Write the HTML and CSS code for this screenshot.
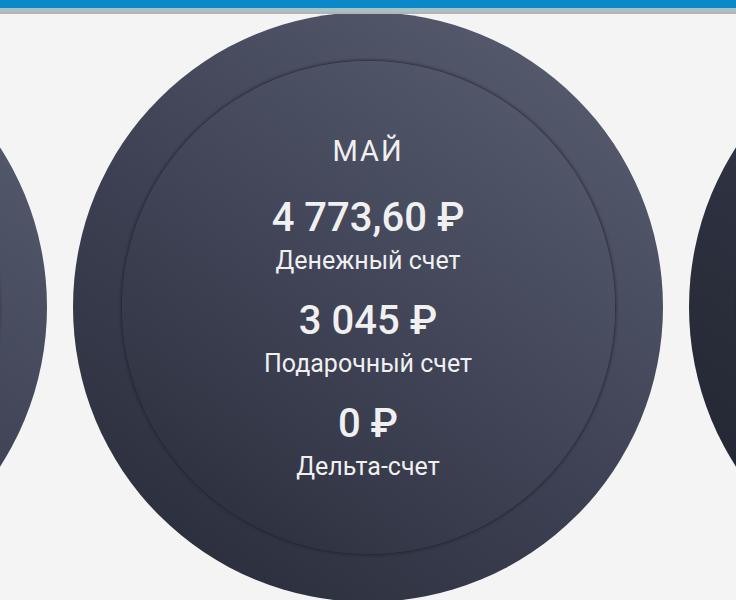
FILE: index.html
```html
<!DOCTYPE html>
<html lang="ru">
<head>
<meta charset="utf-8">
<link rel="stylesheet" href="styles.css">
</head>
<body>
<div class="topbar"></div>
<div class="carousel">
  <div class="disc side"><div class="inner"></div></div>
  <div class="disc main">
    <div class="inner">
      <div class="month">МАЙ</div>
      <div class="acc">
        <div class="amount">4 773,60 ₽</div>
        <div class="label">Денежный счет</div>
      </div>
      <div class="acc">
        <div class="amount">3 045 ₽</div>
        <div class="label">Подарочный счет</div>
      </div>
      <div class="acc">
        <div class="amount">0 ₽</div>
        <div class="label">Дельта-счет</div>
      </div>
    </div>
  </div>
  <div class="disc side right"><div class="inner"></div></div>
</div>
</body>
</html>
```
FILE: styles.css
```css
html, body {
  margin: 0;
  padding: 0;
  background: #f4f4f4;
  height: 600px;
  overflow: hidden;
  font-family: Roboto, "Noto Sans", sans-serif;
}
.topbar {
  height: 8px;
  background: #0a88c8;
  border-bottom: 4px solid #a7c2c7;
  box-shadow: 0 2px 0 #b4b4b4;
  position: relative;
  z-index: 2;
}
.carousel {
  display: flex;
  justify-content: center;
  gap: 26px;
  overflow: hidden;
}
.disc {
  flex: 0 0 590px;
  height: 590px;
  border-radius: 50%;
  background: linear-gradient(35deg, #262a36 0%, #3c4052 45%, #5b6073 100%);
  display: flex;
  align-items: center;
  justify-content: center;
}
.inner {
  width: 493px;
  height: 493px;
  border-radius: 50%;
  background: linear-gradient(35deg, #282c38 0%, #3e4254 45%, #585d70 100%);
  box-shadow: 0 0 3px 1px rgba(28, 30, 42, 0.75);
  display: flex;
  flex-direction: column;
  align-items: center;
  color: #f0f0f2;
}
.side .inner {
  box-shadow: 0 0 3px 1px rgba(28, 30, 42, 0.6);
}
.right {
  background: linear-gradient(35deg, #1f232e 0%, #2e3240 45%, #4a4f60 100%);
}
.right .inner {
  background: linear-gradient(35deg, #20242f 0%, #303442 45%, #4a4f60 100%);
}
.month {
  margin-top: 74px;
  font-size: 29px;
  line-height: 32px;
  letter-spacing: 2px;
}
.acc {
  display: flex;
  flex-direction: column;
  align-items: center;
  margin-top: 29px;
}
.acc + .acc {
  margin-top: 23px;
}
.amount {
  font-size: 40px;
  font-weight: 500;
  line-height: 44px;
}
.label {
  font-size: 25px;
  line-height: 30px;
  margin-top: 6px;
}
```
